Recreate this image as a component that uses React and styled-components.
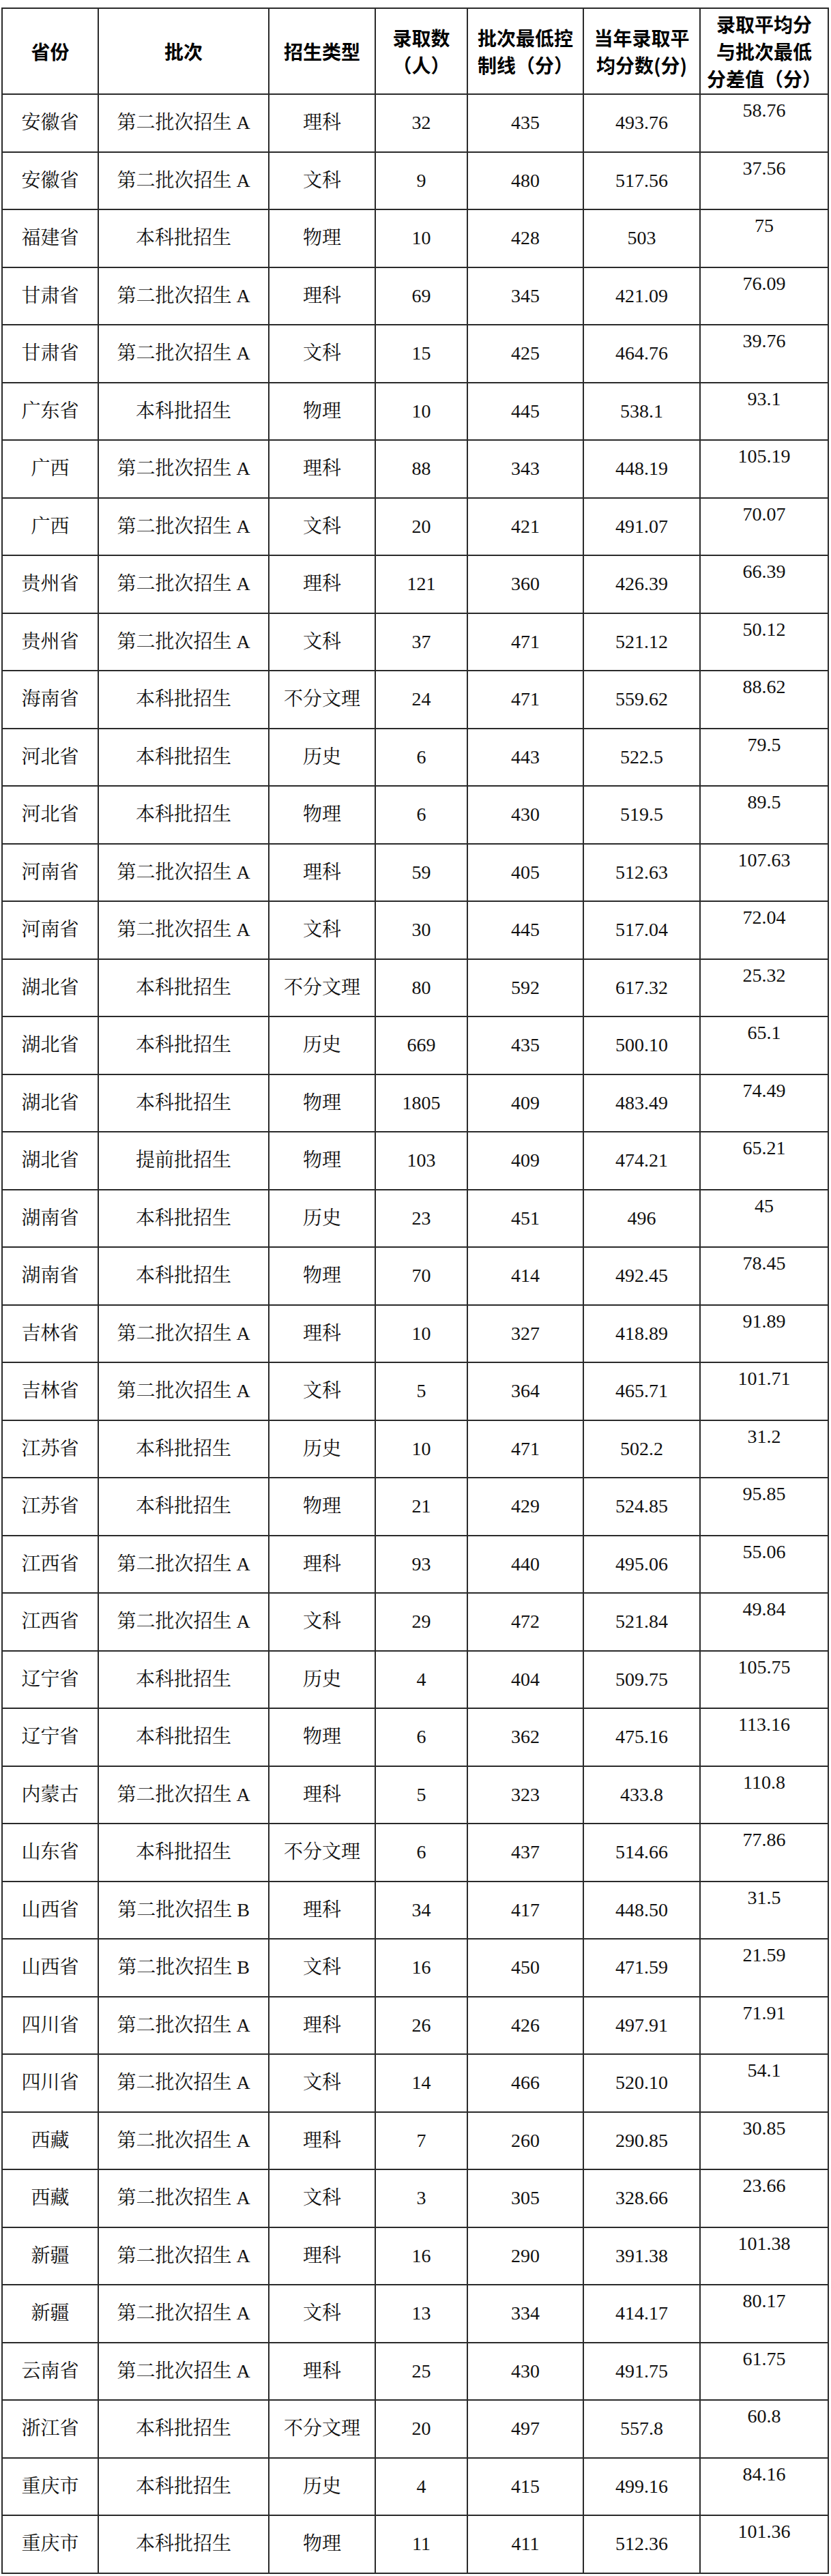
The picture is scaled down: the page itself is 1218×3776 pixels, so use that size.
import React from 'react';
import styled, { createGlobalStyle } from 'styled-components';

const GlobalStyle = createGlobalStyle`
  html, body {
    margin: 0;
    padding: 0;
    background: #ffffff;
  }
`;

const Page = styled.div`
  padding: 11px 0 0 2px;
`;

const Table = styled.table`
  width: 1211px;
  table-layout: fixed;
  border-collapse: collapse;
  color: #111111;
`;

const HeadRow = styled.tr`
  height: 126px;
`;

const Row = styled.tr`
  height: 84.5px;
`;

const HeadCell = styled.th`
  border: 2px solid #2a2a2a;
  padding: 0 1px;
  font-family: "Noto Sans CJK SC", "Liberation Sans", sans-serif;
  font-weight: 700;
  font-size: 28px;
  line-height: 40px;
  text-align: center;
  vertical-align: middle;
  color: #000000;
`;

const Cell = styled.td`
  border: 2px solid #2a2a2a;
  padding: ${(p) => (p.$top ? '8px 2px 0' : '0 2px')};
  font-family: "Liberation Serif", "Noto Serif CJK SC", "Noto Sans CJK SC", serif;
  font-weight: 400;
  font-size: 28px;
  line-height: 30px;
  text-align: center;
  vertical-align: ${(p) => (p.$top ? 'top' : 'middle')};
  white-space: nowrap;
`;

const widths = [141, 250, 156, 135, 170, 171, 188];

const A = '第二批次招生 A';
const B = '第二批次招生 B';
const BK = '本科批招生';

const rows = [
  ['安徽省', A, '理科', '32', '435', '493.76', '58.76'],
  ['安徽省', A, '文科', '9', '480', '517.56', '37.56'],
  ['福建省', BK, '物理', '10', '428', '503', '75'],
  ['甘肃省', A, '理科', '69', '345', '421.09', '76.09'],
  ['甘肃省', A, '文科', '15', '425', '464.76', '39.76'],
  ['广东省', BK, '物理', '10', '445', '538.1', '93.1'],
  ['广西', A, '理科', '88', '343', '448.19', '105.19'],
  ['广西', A, '文科', '20', '421', '491.07', '70.07'],
  ['贵州省', A, '理科', '121', '360', '426.39', '66.39'],
  ['贵州省', A, '文科', '37', '471', '521.12', '50.12'],
  ['海南省', BK, '不分文理', '24', '471', '559.62', '88.62'],
  ['河北省', BK, '历史', '6', '443', '522.5', '79.5'],
  ['河北省', BK, '物理', '6', '430', '519.5', '89.5'],
  ['河南省', A, '理科', '59', '405', '512.63', '107.63'],
  ['河南省', A, '文科', '30', '445', '517.04', '72.04'],
  ['湖北省', BK, '不分文理', '80', '592', '617.32', '25.32'],
  ['湖北省', BK, '历史', '669', '435', '500.10', '65.1'],
  ['湖北省', BK, '物理', '1805', '409', '483.49', '74.49'],
  ['湖北省', '提前批招生', '物理', '103', '409', '474.21', '65.21'],
  ['湖南省', BK, '历史', '23', '451', '496', '45'],
  ['湖南省', BK, '物理', '70', '414', '492.45', '78.45'],
  ['吉林省', A, '理科', '10', '327', '418.89', '91.89'],
  ['吉林省', A, '文科', '5', '364', '465.71', '101.71'],
  ['江苏省', BK, '历史', '10', '471', '502.2', '31.2'],
  ['江苏省', BK, '物理', '21', '429', '524.85', '95.85'],
  ['江西省', A, '理科', '93', '440', '495.06', '55.06'],
  ['江西省', A, '文科', '29', '472', '521.84', '49.84'],
  ['辽宁省', BK, '历史', '4', '404', '509.75', '105.75'],
  ['辽宁省', BK, '物理', '6', '362', '475.16', '113.16'],
  ['内蒙古', A, '理科', '5', '323', '433.8', '110.8'],
  ['山东省', BK, '不分文理', '6', '437', '514.66', '77.86'],
  ['山西省', B, '理科', '34', '417', '448.50', '31.5'],
  ['山西省', B, '文科', '16', '450', '471.59', '21.59'],
  ['四川省', A, '理科', '26', '426', '497.91', '71.91'],
  ['四川省', A, '文科', '14', '466', '520.10', '54.1'],
  ['西藏', A, '理科', '7', '260', '290.85', '30.85'],
  ['西藏', A, '文科', '3', '305', '328.66', '23.66'],
  ['新疆', A, '理科', '16', '290', '391.38', '101.38'],
  ['新疆', A, '文科', '13', '334', '414.17', '80.17'],
  ['云南省', A, '理科', '25', '430', '491.75', '61.75'],
  ['浙江省', BK, '不分文理', '20', '497', '557.8', '60.8'],
  ['重庆市', BK, '历史', '4', '415', '499.16', '84.16'],
  ['重庆市', BK, '物理', '11', '411', '512.36', '101.36'],
];

const App = () => {
  return (
    <Page>
      <GlobalStyle />
      <Table>
        <colgroup>
          {widths.map((w, i) => (
            <col key={i} style={{ width: w }} />
          ))}
        </colgroup>
        <thead>
          <HeadRow>
            <HeadCell>省份</HeadCell>
            <HeadCell>批次</HeadCell>
            <HeadCell>招生类型</HeadCell>
            <HeadCell>
              录取数
              <br />
              （人）
            </HeadCell>
            <HeadCell>
              批次最低控
              <br />
              制线（分）
            </HeadCell>
            <HeadCell>
              当年录取平
              <br />
              均分数(分)
            </HeadCell>
            <HeadCell>
              录取平均分
              <br />
              与批次最低
              <br />
              分差值（分）
            </HeadCell>
          </HeadRow>
        </thead>
        <tbody>
          {rows.map((r, i) => (
            <Row key={i}>
              {r.map((v, j) => (
                <Cell key={j} $top={j === 6}>
                  {v}
                </Cell>
              ))}
            </Row>
          ))}
        </tbody>
      </Table>
    </Page>
  );
};

export default App;
